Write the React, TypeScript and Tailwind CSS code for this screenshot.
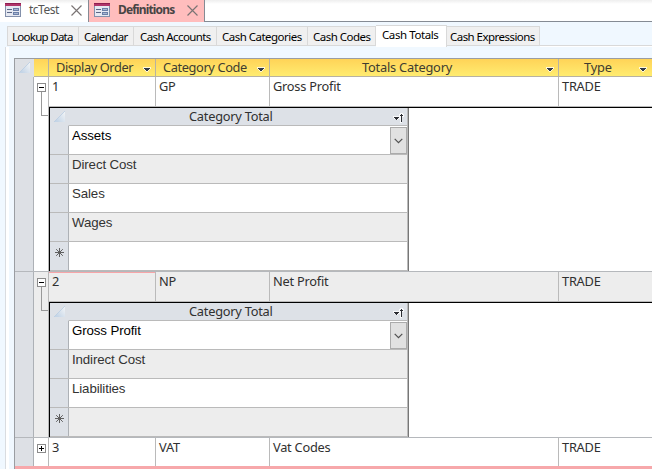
import type { ReactNode } from "react";

const UI = "font-['Noto_Sans','Open_Sans',sans-serif]";

function FormIcon() {
  return (
    <svg width="16" height="14" viewBox="0 0 16 14" shapeRendering="crispEdges" className="mb-[2px] shrink-0">
      <rect x="0" y="0" width="16" height="14" fill="#8390ab" />
      <rect x="0" y="0" width="16" height="3" fill="#b0356a" />
      <rect x="0" y="0" width="16" height="1" fill="#8f1d50" />
      <rect x="1" y="3" width="14" height="10" fill="#e6e9f2" />
      <rect x="2" y="6" width="5" height="1" fill="#5b6887" />
      <rect x="2" y="9" width="5" height="1" fill="#5b6887" />
      <rect x="8" y="5" width="6" height="3" fill="#6b80a8" />
      <rect x="9" y="6" width="4" height="1" fill="#a9b7d2" />
      <rect x="8" y="9" width="6" height="3" fill="#6b80a8" />
      <rect x="9" y="10" width="4" height="1" fill="#a9b7d2" />
    </svg>
  );
}

function CloseIcon() {
  return (
    <svg width="11" height="11" viewBox="0 0 11 11" className="mb-px shrink-0">
      <path d="M.5.5l10 10M10.5.5l-10 10" stroke="#7a7474" strokeWidth="1.15" />
    </svg>
  );
}

function Caret() {
  return (
    <svg width="8" height="6" viewBox="0 0 8 6" shapeRendering="crispEdges" className="shrink-0">
      <path d="M0 0h8v2H7v1H6v1H5v1H3V4H2V3H1V2H0z" fill="#fff8d8" />
      <path d="M1 1h6v1H6v1H5v1H3V3H2V2H1z" fill="#333a48" />
    </svg>
  );
}

function Corner() {
  return (
    <svg width="11" height="11" viewBox="0 0 11 11" className="block">
      <defs>
        <linearGradient id="cornerFill" x1="0" y1="1" x2="1" y2="0.2">
          <stop offset="0.2" stopColor="#c4d5e7" />
          <stop offset="1" stopColor="#eff2f5" />
        </linearGradient>
      </defs>
      <path d="M0 11L11 0V11z" fill="url(#cornerFill)" />
      <path d="M0 11L11 0" stroke="#b9cde2" strokeWidth="0.8" />
    </svg>
  );
}

function SortIcon() {
  return (
    <svg width="11" height="10" viewBox="0 0 11 10" shapeRendering="crispEdges">
      <path d="M0 3h6V1h1V0h3v1h1v3H9v6H7V6H5v1H3V6H1V5H0z" fill="#f8f9fb" />
      <path d="M1 4h5v1H5v1H4v1H3V6H2V5H1zM8 1h1v8H8zM7 2h3v1H7z" fill="#2b2d33" />
    </svg>
  );
}

function NewRecord() {
  return (
    <svg width="9" height="9" viewBox="0 0 9 9">
      <path d="M4.5 0v9M0 4.5h9M1.2 1.2l6.6 6.6M7.8 1.2L1.2 7.8" stroke="#606060" strokeWidth="1" />
    </svg>
  );
}

function Expander({ open }: { open: boolean }) {
  return (
    <svg width="11" height="34" viewBox="0 0 11 34" shapeRendering="crispEdges" className="block">
      <rect x="0.5" y="0.5" width="8" height="8" fill="#fff" stroke="#8c8c8c" />
      <path d={open ? "M2 4.5h5" : "M2 4.5h5M4.5 2v5"} stroke="#000" />
      {open && <path d="M4.5 9v23.5H11" fill="none" stroke="#999" />}
    </svg>
  );
}

const tabs = [
  { label: "Lookup Data", box: "w-[72px] pl-[4px] border-l tracking-[-0.72px]" },
  { label: "Calendar", box: "w-[55px] pl-[5px] tracking-[-0.62px]" },
  { label: "Cash Accounts", box: "w-[83px] pl-[6px] tracking-[-0.6px]" },
  { label: "Cash Categories", box: "w-[91px] pl-[5px] tracking-[-0.52px]" },
  { label: "Cash Codes", box: "w-[68px] pl-[5px] tracking-[-0.52px]" },
  { label: "Cash Totals", box: "w-[71px] pl-[6px] tracking-[-0.42px]", active: true },
  { label: "Cash Expressions", box: "w-[93px] pl-[3px] tracking-[-0.54px]" },
];

const columns = [
  { label: "Display Order", box: "w-[107px] pl-[7px] pr-[4px] tracking-[-0.4px]" },
  { label: "Category Code", box: "w-[114px] pl-[7px] pr-[4px] tracking-[-0.38px]" },
  { label: "Totals Category", box: "w-[289px] pl-[92px] pr-[4px] tracking-[-0.2px]" },
  { label: "Type", box: "w-[98px] pl-[25px] pr-[9px] tracking-[-0.2px]" },
];

const gridText = "text-[12.8px] tracking-[-0.24px] text-[#303030]";

function Record({ values, expanded, shaded, children }: { values: string[]; expanded: boolean; shaded?: boolean; children?: ReactNode }) {
  const widths = ["w-[107px]", "w-[114px]", "w-[289px]", "w-[98px]"];
  const bg = shaded ? "bg-[#ededed]" : "bg-white";
  return (
    <div className={`flex ${expanded ? "border-b border-[#b5b8bc]" : ""}`}>
      <div className="w-[19px] shrink-0 border-r border-[#adb1b6] bg-[#dde0e5]" />
      <div className={`w-[15px] shrink-0 border-r border-[#b8b8b8] pl-[3px] pt-[6px] ${bg}`}>
        <Expander open={expanded} />
      </div>
      <div className="flex w-[608px] shrink-0 flex-col">
        <div className={`flex shrink-0 ${expanded ? "h-[30px] border-b border-[#bababa]" : "h-[28px]"} ${bg}`}>
          {values.map((v, i) => (
            <div
              key={i}
              className={`${widths[i]} ${gridText} shrink-0 border-r border-[#bababa] pl-[3px] leading-[19px] ${shaded && i === 0 ? "shadow-[inset_0_1px_#f7a5a8]" : ""}`}
            >
              {v}
            </div>
          ))}
        </div>
        {children}
      </div>
    </div>
  );
}

function SubSheet({ rows }: { rows: string[] }) {
  return (
    <div className="border-l border-t border-black bg-white">
      <div className="w-[359px] border-r border-[#777]">
        <div className="flex h-[18px] border-r border-[#b9b9b9] bg-[#dde1e7]">
          <div className="w-[18px] shrink-0 pl-[4px] pt-[3px]">
            <Corner />
          </div>
          <div className={`flex flex-1 items-center border-b border-l border-b-[#bababa] border-l-[#dde1e7] pl-[120px] leading-[17px] ${gridText}`}>
            <span className="flex-1">Category Total</span>
            <span className="flex w-[14px] pt-[3px]">
              <SortIcon />
            </span>
          </div>
        </div>
        {rows.concat("").map((name, i) => {
          const last = i === rows.length;
          return (
            <div key={i} className={`flex h-[29px] border-b border-r border-[#bababa] ${i % 2 ? "bg-[#ededed]" : "bg-white"}`}>
              <div className={`flex w-[19px] shrink-0 border-r border-[#adb1b6] bg-[#dde1e7] pl-[5px] ${last ? "pt-[6px]" : ""}`}>
                {last && <NewRecord />}
              </div>
              <div
                className={`flex-1 pl-[3px] font-['Liberation_Sans',Arial,sans-serif] text-[13.3px] leading-[20px] tracking-[-0.12px] ${i === 0 ? "text-black" : "text-[#333]"}`}
              >
                {name}
              </div>
              {i === 0 && (
                <div className="mt-px flex h-[27px] w-[17px] shrink-0 items-center justify-center border border-[#ababab] bg-[#e1e1e1]">
                  <svg width="9" height="6" viewBox="0 0 9 6">
                    <path d="M.7.8L4.5 4.6 8.3.8" fill="none" stroke="#505050" strokeWidth="1.2" />
                  </svg>
                </div>
              )}
            </div>
          );
        })}
      </div>
    </div>
  );
}

export default function App() {
  return (
    <div className={`flex h-[469px] w-[652px] flex-col overflow-hidden bg-[#f0f8ff] whitespace-nowrap ${UI}`}>
      <div className="flex h-[22px] shrink-0 bg-linear-to-b from-[#eeeeee] to-white to-[4px] text-[12px] leading-[20px]">
        <div className="flex w-[88px] items-center pl-[5px] text-[#555]">
          <FormIcon />
          <span className="mb-[2px] ml-[8px] w-[42px] tracking-[-0.5px]">tcTest</span>
          <CloseIcon />
        </div>
        <div className="flex w-[117px] items-center border-x border-[#858b94] bg-[#ffbdbd] pl-[5px] text-[#484444]">
          <FormIcon />
          <span className="mb-[2px] ml-[8px] w-[69px] font-bold tracking-[-0.85px]">Definitions</span>
          <CloseIcon />
        </div>
        <div className="flex-1 border-b border-[#858b94]" />
      </div>

      <div className="flex h-[25px] shrink-0 items-end pl-[7px] pt-[3px]">
        {tabs.map((t) => (
          <div
            key={t.label}
            className={`${t.box} shrink-0 border-[#d9d9d9] text-[11.5px] text-black ${
              t.active
                ? "h-[22px] border-t border-r bg-white leading-[18px]"
                : "mb-px h-[20px] border-y border-r bg-[#f0f0f0] leading-[19px]"
            }`}
          >
            {t.label}
          </div>
        ))}
        <div className="h-[2px] flex-1 border-t border-[#d9d9d9] bg-white" />
      </div>

      <div className="ml-[5px] flex-1 border-l border-[#d9dce0] bg-white pl-[3px]">
        <div className="h-full bg-[#f0f8ff] pl-[5px] pt-[11px]">
          <div className="h-[411px] w-[638px] overflow-hidden border-l border-t border-[#9a9da2] bg-white">
            <div className="flex h-[18px]">
              <div className="w-[19px] shrink-0 border-r border-[#dde0e5] bg-[#dde0e5] pl-[4px] pt-[3px]">
                <Corner />
              </div>
              <div className="w-[15px] shrink-0 border-b border-r border-[#b7b2a2] bg-linear-to-b from-[#ffd357] to-[#ffec70]" />
              {columns.map((c) => (
                <div
                  key={c.label}
                  className={`${c.box} flex shrink-0 items-center border-b border-r border-[#b7b2a2] bg-linear-to-b from-[#ffd357] to-[#ffec70] text-[12.8px] leading-[17px] text-[#403c30]`}
                >
                  <span className="flex-1">{c.label}</span>
                  <span className="flex pt-[5px]">
                    <Caret />
                  </span>
                </div>
              ))}
            </div>
            <Record values={["1", "GP", "Gross Profit", "TRADE"]} expanded>
              <SubSheet rows={["Assets", "Direct Cost", "Sales", "Wages"]} />
            </Record>
            <Record values={["2", "NP", "Net Profit", "TRADE"]} expanded shaded>
              <SubSheet rows={["Gross Profit", "Indirect Cost", "Liabilities"]} />
            </Record>
            <div className="h-[28px] overflow-hidden">
              <Record values={["3", "VAT", "Vat Codes", "TRADE"]} expanded={false} />
            </div>
            <div className="h-[3px] bg-[#f7a8ab]" />
          </div>
        </div>
      </div>
    </div>
  );
}
